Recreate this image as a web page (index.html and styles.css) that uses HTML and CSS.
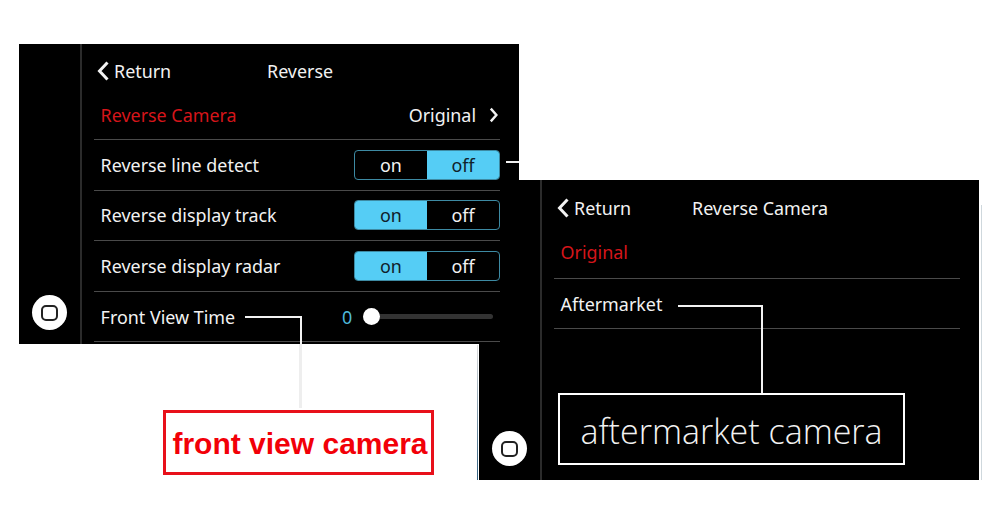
FILE: index.html
```html
<!DOCTYPE html>
<html lang="en">
<head>
  <meta charset="UTF-8" />
  <title>Reverse settings</title>
  <link rel="stylesheet" href="styles.css">
</head>
<body>
  <!-- second screen, sits behind the first one -->
  <section class="screen screen-sub">
    <div class="dock">
      <div class="home"><span class="home-square"></span></div>
    </div>
    <div class="panel">
      <header class="topbar">
        <svg class="chev" viewBox="0 0 12 20" width="12" height="20"><path d="M10.5 1.5 L2.5 10 L10.5 18.5" /></svg>
        <span class="back">Return</span>
        <span class="title title-sub">Reverse Camera</span>
      </header>
      <div class="row row-first"><span class="active">Original</span></div>
      <div class="row"><span>Aftermarket</span></div>
    </div>
  </section>

  <!-- first head unit screen -->
  <section class="screen screen-main">
    <div class="dock">
      <div class="home"><span class="home-square"></span></div>
    </div>
    <div class="panel">
      <header class="topbar">
        <svg class="chev" viewBox="0 0 12 20" width="12" height="20"><path d="M10.5 1.5 L2.5 10 L10.5 18.5" /></svg>
        <span class="back">Return</span>
        <span class="title">Reverse</span>
      </header>
      <div class="row row-first">
        <span class="active">Reverse Camera</span>
        <span class="value">Original
          <svg class="chev chev-right" viewBox="0 0 12 20" width="10" height="16"><path d="M2 2 L9 10 L2 18" /></svg>
        </span>
      </div>
      <div class="row">
        <span>Reverse line detect</span>
        <div class="toggle"><span>on</span><span class="lit">off</span></div>
      </div>
      <div class="row">
        <span>Reverse display track</span>
        <div class="toggle"><span class="lit">on</span><span>off</span></div>
      </div>
      <div class="row">
        <span>Reverse display radar</span>
        <div class="toggle"><span class="lit">on</span><span>off</span></div>
      </div>
      <div class="row">
        <span>Front View Time</span>
        <div class="slider">
          <span class="slider-value">0</span>
          <div class="track"><span class="knob"></span></div>
        </div>
      </div>
    </div>
  </section>

  <!-- callout lines and labels -->
  <span class="line line-off"></span>
  <span class="line line-front-h"></span>
  <span class="line line-front-v"></span>
  <span class="line line-front-pale"></span>
  <span class="line line-after-h"></span>
  <span class="line line-after-v"></span>
  <span class="edge edge-left"></span>
  <span class="edge edge-right"></span>

  <div class="label label-front">front view camera</div>
  <div class="label label-after">aftermarket camera</div>
</body>
</html>
```

FILE: styles.css
```css
html, body {
  margin: 0;
  height: 524px;
  overflow: hidden;
  background: #fff;
}

body {
  position: relative;
  font-family: "Noto Sans", "Open Sans", sans-serif;
  color: #f2f2f2;
}

/* Screens */
.screen {
  position: absolute;
  width: 500px;
  height: 300px;
  display: flex;
  background: #000;
  overflow: hidden;
}
.screen-main {
  left: 19px;
  top: 44px;
}
.screen-sub {
  left: 479px;
  top: 180px;
}

.dock {
  width: 61px;
  flex-shrink: 0;
  box-sizing: content-box;
  border-right: 2px solid #2b2b2b;
  display: flex;
  align-items: flex-end;
  justify-content: center;
  padding-bottom: 14px;
  height: 286px;
}

.home {
  width: 35px;
  height: 35px;
  border-radius: 50%;
  background: #fff;
  display: flex;
  align-items: center;
  justify-content: center;
}
.home-square {
  width: 13px;
  height: 12px;
  border: 2.5px solid #222;
  border-radius: 5px;
}

.panel {
  flex: 1;
  padding: 0 19px 0 12px;
  font-size: 17.9px;
}

/* Header */
.topbar {
  height: 54px;
  display: flex;
  align-items: center;
  position: relative;
}
.screen-sub .topbar {
  padding-top: 1px;
  height: 53px;
}
.chev {
  fill: none;
  stroke: #f2f2f2;
  stroke-width: 3;
}
.topbar .chev {
  margin-left: 3px;
  margin-right: 5px;
}
.title {
  position: absolute;
  left: 173px;
}
.title-sub {
  left: 138px;
}

/* Rows */
.row {
  height: 49.6px;
  border-bottom: 1px solid #4a4a4a;
  padding: 0 0 0 6.6px;
  display: flex;
  align-items: center;
  justify-content: space-between;
}
.row-first {
  height: 33px;
  padding-bottom: 8px;
}
.screen-sub .row-first {
  height: 36px;
}
.screen-sub .row-first + .row {
  height: 49px;
}
.active {
  color: #d5151a;
}
.value {
  display: flex;
  align-items: center;
  gap: 13px;
  margin-right: 1px;
}

/* on/off switch */
.toggle {
  width: 146px;
  height: 30px;
  box-sizing: border-box;
  border: 1px solid #3d8aa3;
  border-radius: 4px;
  display: flex;
  overflow: hidden;
}
.toggle span {
  flex: 1;
  text-align: center;
  line-height: 28px;
}
.toggle .lit {
  background: #55cdf5;
  color: #10212a;
}

/* Front view time slider */
.slider {
  display: flex;
  align-items: center;
  width: 158px;
}
.slider-value {
  color: #4fb8d8;
  width: 29px;
}
.track {
  flex: 1;
  height: 5px;
  background: #333;
  border-radius: 3px;
  position: relative;
  margin-right: 7px;
}
.knob {
  position: absolute;
  left: -8px;
  top: -6px;
  width: 17px;
  height: 17px;
  border-radius: 50%;
  background: #fff;
}

/* Callout lines */
.line {
  position: absolute;
  background: #f2f2f2;
}
.line-off {
  left: 506px;
  top: 161px;
  width: 13px;
  height: 2px;
}
.line-front-h {
  left: 245px;
  top: 316px;
  width: 57px;
  height: 2px;
}
.line-front-v {
  left: 300px;
  top: 316px;
  width: 2px;
  height: 28px;
}
.line-front-pale {
  left: 299px;
  top: 344px;
  width: 3px;
  height: 64px;
  background: #eee;
}
.line-after-h {
  left: 678px;
  top: 305px;
  width: 85px;
  height: 2px;
}
.line-after-v {
  left: 761px;
  top: 305px;
  width: 2px;
  height: 88px;
}

/* faint scan edges around the second screen */
.edge {
  position: absolute;
  width: 1px;
}
.edge-left {
  left: 477px;
  top: 345px;
  height: 135px;
  background: linear-gradient(#ddd, #2f5f80);
}
.edge-right {
  left: 981px;
  top: 205px;
  height: 275px;
  background: #cfd8dd;
}

/* Labels */
.label {
  position: absolute;
  box-sizing: border-box;
  display: flex;
  align-items: center;
  justify-content: center;
  white-space: nowrap;
}
.label-front {
  left: 163px;
  top: 410px;
  width: 271px;
  height: 65px;
  padding: 3px 0 0 3px;
  border: 3px solid #e8101a;
  color: #f20008;
  font: bold 30px "Liberation Sans", Arial, sans-serif;
}
.label-after {
  left: 558px;
  top: 393px;
  width: 347px;
  height: 72px;
  padding-top: 3px;
  border: 2px solid #fff;
  background: #000;
  color: #f2f2f2;
  font: 300 34px "Open Sans", "Noto Sans", sans-serif;
}
```
